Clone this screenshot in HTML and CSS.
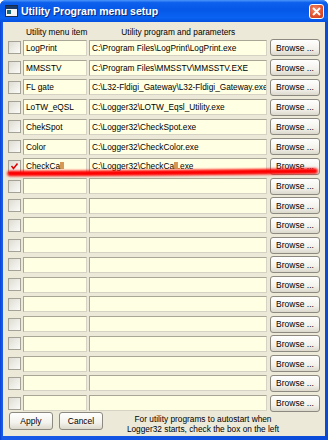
FILE: index.html
```html
<!DOCTYPE html>
<html lang="en">
<head>
    <meta charset="UTF-8">
    <title>Utility Program menu setup</title>
    <link rel="stylesheet" href="styles.css">
</head>
<body>

<div class="window">

    <div class="titlebar">
        <svg class="app-icon" width="13" height="12" viewBox="0 0 13 12">
            <rect x="0.5" y="0.5" width="12" height="11" fill="#f4f4f4" stroke="#1a2a4a"/>
            <rect x="1" y="1" width="11" height="3" fill="#1a3a6a"/>
            <path d="M2 5 h4 v4 h-4z" fill="#1a6a7a"/>
        </svg>
        <span class="title">Utility Program menu setup</span>
        <div class="close-btn">
            <svg width="9" height="9" viewBox="0 0 9 9"><path d="M1 1 L8 8 M8 1 L1 8" stroke="#fff" stroke-width="1.8"/></svg>
        </div>
    </div>

    <div class="client">
        <div class="header">
            <span class="label">Utility menu item</span>
            <span class="label label-path">Utility program and parameters</span>
        </div>

        <div class="rows">
            <div class="row"><span class="check"></span><div class="field">LogPrint</div><div class="field">C:\Program Files\LogPrint\LogPrint.exe</div><button class="browse">Browse ...</button></div>
            <div class="row"><span class="check"></span><div class="field">MMSSTV</div><div class="field">C:\Program Files\MMSSTV\MMSSTV.EXE</div><button class="browse">Browse ...</button></div>
            <div class="row"><span class="check"></span><div class="field">FL gate</div><div class="field">C:\L32-Fldigi_Gateway\L32-Fldigi_Gateway.exe</div><button class="browse">Browse ...</button></div>
            <div class="row"><span class="check"></span><div class="field">LoTW_eQSL</div><div class="field">C:\Logger32\LOTW_Eqsl_Utility.exe</div><button class="browse">Browse ...</button></div>
            <div class="row"><span class="check"></span><div class="field">ChekSpot</div><div class="field">C:\Logger32\CheckSpot.exe</div><button class="browse">Browse ...</button></div>
            <div class="row"><span class="check"></span><div class="field">Color</div><div class="field">C:\Logger32\CheckColor.exe</div><button class="browse">Browse ...</button></div>
            <div class="row"><span class="check"><svg width="9" height="9" viewBox="0 0 9 9"><path d="M1.5 4 L3.5 6.5 L7.5 1.5" fill="none" stroke="#e00000" stroke-width="1.5"/></svg></span><div class="field">CheckCall</div><div class="field">C:\Logger32\CheckCall.exe</div><button class="browse">Browse ...</button></div>
            <div class="row"><span class="check"></span><div class="field"></div><div class="field"></div><button class="browse">Browse ...</button></div>
            <div class="row"><span class="check"></span><div class="field"></div><div class="field"></div><button class="browse">Browse ...</button></div>
            <div class="row"><span class="check"></span><div class="field"></div><div class="field"></div><button class="browse">Browse ...</button></div>
            <div class="row"><span class="check"></span><div class="field"></div><div class="field"></div><button class="browse">Browse ...</button></div>
            <div class="row"><span class="check"></span><div class="field"></div><div class="field"></div><button class="browse">Browse ...</button></div>
            <div class="row"><span class="check"></span><div class="field"></div><div class="field"></div><button class="browse">Browse ...</button></div>
            <div class="row"><span class="check"></span><div class="field"></div><div class="field"></div><button class="browse">Browse ...</button></div>
            <div class="row"><span class="check"></span><div class="field"></div><div class="field"></div><button class="browse">Browse ...</button></div>
            <div class="row"><span class="check"></span><div class="field"></div><div class="field"></div><button class="browse">Browse ...</button></div>
            <div class="row"><span class="check"></span><div class="field"></div><div class="field"></div><button class="browse">Browse ...</button></div>
            <div class="row"><span class="check"></span><div class="field"></div><div class="field"></div><button class="browse">Browse ...</button></div>
            <div class="row"><span class="check"></span><div class="field"></div><div class="field"></div><button class="browse">Browse ...</button></div>
        </div>

        <div class="footer">
            <button class="btn">Apply</button>
            <button class="btn btn-cancel">Cancel</button>
            <div class="note">For utility programs to autostart when<br>Logger32 starts, check the box on the left</div>
        </div>
    </div>

    <!-- red marker stroke drawn over the dialog -->
    <svg class="marker" width="328" height="440" viewBox="0 0 328 440">
        <defs>
            <filter id="soft" x="-5%" y="-300%" width="110%" height="700%">
                <feGaussianBlur stdDeviation="1.1"/>
            </filter>
        </defs>
        <path d="M10 173.5 Q 160 173 315 171" fill="none" stroke="#ff0000" stroke-width="5.5" stroke-linecap="round" filter="url(#soft)"/>
    </svg>

</div>

</body>
</html>
```

FILE: styles.css
```css
body {
    margin: 0;
    width: 328px;
    height: 440px;
    overflow: hidden;
    font-family: "Liberation Sans", Arial, sans-serif;
    font-size: 8.3px;
    color: #000;
}

.window {
    position: relative;
    width: 328px;
    height: 440px;
    display: flex;
    flex-direction: column;
    background: linear-gradient(to right, #0841d0, #1a5ae8 2px, #0a4ad8);
    border-radius: 6px 6px 0 0;
    box-sizing: border-box;
}

.titlebar {
    height: 22px;
    display: flex;
    align-items: center;
    padding: 0 5px 0 5px;
    border-radius: 6px 6px 0 0;
    background: linear-gradient(to bottom, #4b95fb 0%, #0d60ec 12%, #0558e8 45%, #0a63f2 80%, #0550e0 100%);
}

.app-icon {
    flex: none;
}

.title {
    margin-left: 3px;
    color: #fff;
    font-weight: bold;
    font-size: 10.5px;
    text-shadow: 1px 1px 0 #0a2a7a;
    flex: 1;
}

.close-btn {
    width: 15px;
    height: 15px;
    box-sizing: border-box;
    border: 1px solid #fff;
    border-radius: 3px;
    background: radial-gradient(circle at 40% 35%, #f08a6a, #e0502c 60%, #c33a18);
    display: flex;
    align-items: center;
    justify-content: center;
    margin-right: -1px;
}

.client {
    flex: 1;
    margin: 0 3px 4px 3px;
    background-color: #ece9d8;
    display: flex;
    flex-direction: column;
}

.header {
    height: 16px;
    display: flex;
    align-items: flex-end;
    padding-left: 23px;
    box-sizing: border-box;
    padding-bottom: 1px;
}

.label-path {
    margin-left: 34px;
}

.rows {
    height: 375px;
    display: flex;
    flex-direction: column;
}

.row {
    flex: 1;
    display: grid;
    grid-template-columns: 13px 64px 178px 51px;
    column-gap: 2px;
    align-items: center;
    padding-left: 5px;
}

.check {
    width: 13px;
    height: 13px;
    box-sizing: border-box;
    border: 1px solid #a4a196;
    background: linear-gradient(135deg, #dedcd2, #fbfbf8);
    display: flex;
    align-items: center;
    justify-content: center;
}

.field {
    height: 16px;
    box-sizing: border-box;
    background-color: #ffffe3;
    border: 1px solid #d6d3c4;
    border-top-color: #a9a696;
    border-left-color: #a9a696;
    padding-left: 2px;
    line-height: 14px;
    white-space: nowrap;
    overflow: hidden;
}

.browse {
    margin-left: 1px;
    height: 17px;
    padding: 0;
    font-family: "Liberation Sans", Arial, sans-serif;
    font-size: 8.5px;
    color: #000;
    border: 1px solid #8c8a80;
    border-radius: 3px;
    background: linear-gradient(to bottom, #ffffff, #f3f2ec 60%, #dcd8cc);
}

.footer {
    flex: 1;
    display: flex;
    align-items: flex-start;
    padding-left: 6px;
}

.btn {
    width: 44px;
    height: 18px;
    margin-top: -1px;
    padding: 0;
    font-family: "Liberation Sans", Arial, sans-serif;
    font-size: 8.5px;
    color: #000;
    border: 1px solid #8c8a80;
    border-radius: 3px;
    background: linear-gradient(to bottom, #ffffff, #f3f2ec 60%, #dcd8cc);
}

.btn-cancel {
    margin-left: 6px;
}

.note {
    width: 186px;
    margin-left: 7px;
    text-align: center;
    line-height: 10px;
    margin-top: 1px;
}

.marker {
    position: absolute;
    left: 0;
    top: 0;
    pointer-events: none;
}
```
